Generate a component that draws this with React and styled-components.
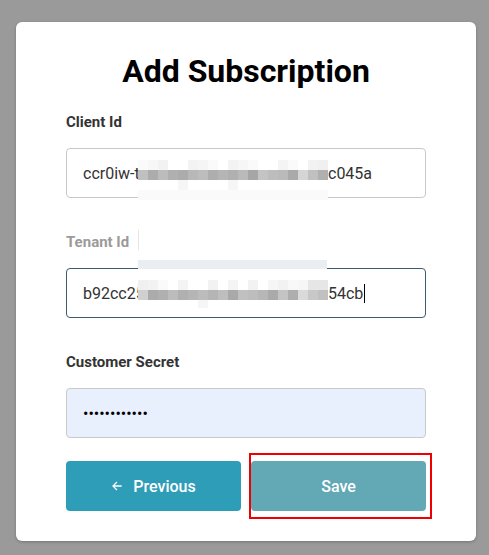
import React from "react";
import styled, { createGlobalStyle } from "styled-components";

const GlobalStyle = createGlobalStyle`
  html, body { margin: 0; padding: 0; background: #9a9a9a; }
  body { font-family: Roboto, "Liberation Sans", Arial, sans-serif; }
  * { box-sizing: border-box; }
`;

const Page = styled.div`
  min-height: 555px;
  padding: 22px 13px 14px 16px;
  display: flex;
  align-items: flex-start;
`;

const Card = styled.div`
  width: 460px;
  background: #ffffff;
  border-radius: 6px;
  box-shadow: 0 1px 3px rgba(0, 0, 0, 0.25);
  padding: 30px 50px 30px 50px;
  display: flex;
  flex-direction: column;
`;

const Title = styled.h1`
  margin: 0;
  font-size: 32px;
  line-height: 38px;
  font-weight: 700;
  color: #000;
  text-align: center;
`;

const Form = styled.div`
  margin-top: 23px;
  display: flex;
  flex-direction: column;
  gap: 35px;
`;

const FieldGroup = styled.div`
  position: relative;
  display: flex;
  flex-direction: column;
`;

const Label = styled.label`
  font-size: 15px;
  line-height: 18px;
  font-weight: 700;
  color: ${(p) => (p.$muted ? "#9b9b9b" : "#333333")};
`;

const FieldBox = styled.div`
  margin-top: 17px;
  height: 50px;
  border: 1px solid ${(p) => (p.$focused ? "#3d5a73" : "#c9c9c9")};
  border-radius: 4px;
  background: ${(p) => (p.$autofill ? "#e8f0fe" : "#ffffff")};
  padding: 0 16px;
  display: flex;
  align-items: center;
  font-size: 16px;
  color: #333333;
`;

const Prefix = styled.span`
  display: inline-block;
  width: 245px;
  white-space: nowrap;
  overflow: hidden;
`;

const Suffix = styled.span`
  white-space: nowrap;
`;

const Caret = styled.span`
  display: inline-block;
  width: 1px;
  height: 19px;
  background: #000;
  margin-left: 1px;
  vertical-align: middle;
`;

const SecretInput = styled.input`
  margin-top: 17px;
  height: 50px;
  width: 100%;
  border: 1px solid #c9c9c9;
  border-radius: 4px;
  background: #e8f0fe;
  padding: 0 16px;
  font-family: Roboto, "Liberation Sans", Arial, sans-serif;
  font-size: 16px;
  color: #000;
  outline: none;
`;

/* Pixelated redaction overlay */
const Redaction = styled.div`
  position: absolute;
  left: 72px;
  top: 47px;
  width: 190px;
  display: flex;
  flex-direction: column;
  pointer-events: none;
`;

const CellRow = styled.div`
  display: flex;
  height: ${(p) => p.$h}px;
`;

const Cell = styled.div`
  width: 10px;
  height: 100%;
  background: ${(p) => p.$c};
`;

const Strip = styled.div`
  position: absolute;
  left: 72px;
  top: ${(p) => p.$top}px;
  width: ${(p) => p.$w}px;
  height: ${(p) => p.$h}px;
  background: ${(p) => p.$c};
  pointer-events: none;
`;

const ButtonRow = styled.div`
  margin-top: 23px;
  display: grid;
  grid-template-columns: 1fr 1fr;
  gap: 10px;
`;

const Button = styled.button`
  height: 50px;
  border: none;
  border-radius: 4px;
  background: ${(p) => (p.$variant === "muted" ? "#62a8b5" : "#2e9db8")};
  color: #ffffff;
  font-family: Roboto, "Liberation Sans", Arial, sans-serif;
  font-size: 16px;
  font-weight: 500;
  display: flex;
  align-items: center;
  justify-content: center;
  gap: 10px;
  cursor: pointer;
  width: 100%;
`;

const SaveWrap = styled.div`
  position: relative;
  display: flex;
`;

const Highlight = styled.div`
  position: absolute;
  left: -2px;
  top: -8px;
  right: -6px;
  bottom: -8px;
  border: 2px solid #ee0000;
  pointer-events: none;
`;

const g = (v) => `rgb(${v},${v},${v})`;

const clientRows = [
  { h: 10, cells: [250, 247, 242, 255, 255, 243, 245, 250, 255, 243, 246, 250, 255, 255, 244, 250, 255, 242, 240].map(g) },
  { h: 10, cells: [192, 172, 188, 176, 172, 184, 189, 174, 181, 176, 186, 166, 196, 189, 186, 170, 213, 192, 176].map(g) },
  { h: 10, cells: [255, 255, 255, 255, 246, 255, 255, 255, 255, 246, 255, 255, 255, 255, 255, 255, 255, 255, 255].map(g) },
  { h: 10, cells: Array(19).fill(g(250)) },
];

const tenantRows = [
  { h: 10, cells: [240, 242, 250, 255, 244, 255, 255, 242, 255, 244, 255, 242, 255, 246, 242, 248, 246, 230, 230].map(g) },
  { h: 10, cells: [208, 171, 176, 188, 176, 181, 188, 181, 190, 169, 192, 189, 183, 170, 196, 174, 218, 200, 192].map(g) },
  { h: 8, cells: [255, 255, 255, 255, 255, 255, 246, 255, 255, 255, 255, 255, 255, 255, 255, 255, 255, 255, 255].map(g) },
];

function Pixelated({ rows }) {
  return (
    <Redaction>
      {rows.map((r, i) => (
        <CellRow key={i} $h={r.h}>
          {r.cells.map((c, j) => (
            <Cell key={j} $c={c} />
          ))}
        </CellRow>
      ))}
    </Redaction>
  );
}

function ArrowLeft() {
  return (
    <svg width="12" height="12" viewBox="0 0 24 24" fill="none">
      <path d="M20 12H5M11 5l-7 7 7 7" stroke="#fff" strokeWidth="2.6" strokeLinecap="square" />
    </svg>
  );
}

export default function App() {
  return (
    <>
      <GlobalStyle />
      <Page>
        <Card>
          <Title>Add Subscription</Title>
          <Form>
            <FieldGroup>
              <Label>Client Id</Label>
              <FieldBox>
                <Prefix>ccr0iw-t</Prefix>
                <Suffix>c045a</Suffix>
              </FieldBox>
              <Pixelated rows={clientRows} />
            </FieldGroup>

            <FieldGroup>
              <Label $muted>Tenant Id</Label>
              <FieldBox $focused>
                <Prefix>b92cc25</Prefix>
                <Suffix>54cb</Suffix>
                <Caret />
              </FieldBox>
              <Strip $top={-3} $w={1} $h={20} $c="#e6e6e6" />
              <Strip $top={27} $w={189} $h={9} $c="#eaeef2" />
              <Pixelated rows={tenantRows} />
            </FieldGroup>

            <FieldGroup>
              <Label>Customer Secret</Label>
              <SecretInput type="password" defaultValue="abcdefghijkl" readOnly />
            </FieldGroup>
          </Form>

          <ButtonRow>
            <Button>
              <ArrowLeft />
              Previous
            </Button>
            <SaveWrap>
              <Button $variant="muted">Save</Button>
              <Highlight />
            </SaveWrap>
          </ButtonRow>
        </Card>
      </Page>
    </>
  );
}
